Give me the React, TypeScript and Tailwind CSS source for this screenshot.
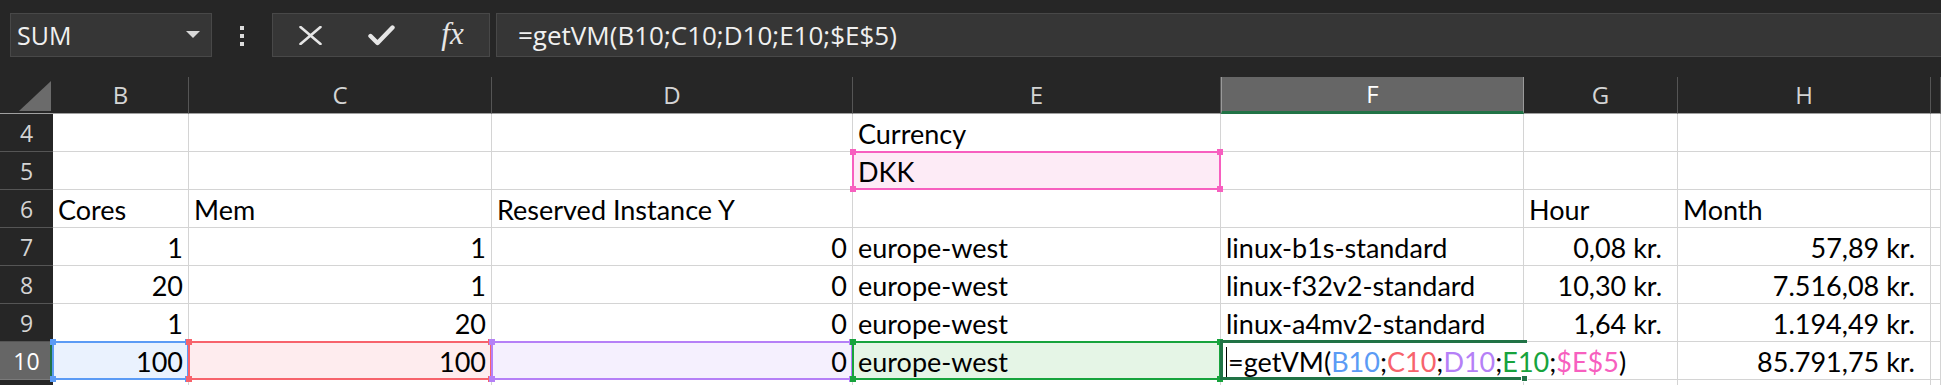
import React from "react";

type HLKey = "blue" | "red" | "purple" | "green" | "pink";

const HL: Record<HLKey, { bg: string; border: string; sq: string }> = {
  blue: { bg: "bg-[#eaf2fe]", border: "border-[#5b9bf5]", sq: "bg-[#5b9bf5]" },
  red: { bg: "bg-[#feecee]", border: "border-[#f7636c]", sq: "bg-[#f7636c]" },
  purple: { bg: "bg-[#f5f0fe]", border: "border-[#b580f7]", sq: "bg-[#b580f7]" },
  green: { bg: "bg-[#e5f5e6]", border: "border-[#17a33d]", sq: "bg-[#17a33d]" },
  pink: { bg: "bg-[#fdebf6]", border: "border-[#f75fbf]", sq: "bg-[#f75fbf]" },
};

const CELL_FONT = "font-['Lato','Liberation_Sans',sans-serif] text-[27px] text-black";
const UI_FONT = "font-['Open_Sans','Noto_Sans',sans-serif]";

function Cell({
  children,
  right,
  pr,
  hl,
}: {
  children?: React.ReactNode;
  right?: boolean;
  pr?: string;
  hl?: HLKey;
}) {
  const h = hl ? HL[hl] : null;
  return (
    <div
      className={[
        "relative h-[38px] border-r border-b border-[#d4d4d4] flex items-center whitespace-nowrap pt-[2px]",
        CELL_FONT,
        h ? h.bg : "bg-white",
        right ? "justify-end" : "justify-start pl-[5px]",
        right ? pr ?? "pr-[5px]" : "",
      ].join(" ")}
    >
      {children !== undefined && <span className="relative z-10 leading-[30px]">{children}</span>}
      {h && (
        <div className={"absolute -top-px -left-px -right-px -bottom-px border-2 z-20 " + h.border}>
          <div className={"absolute -top-[4px] -left-[4px] w-[6px] h-[6px] " + h.sq} />
          <div className={"absolute -top-[4px] -right-[4px] w-[6px] h-[6px] " + h.sq} />
          <div className={"absolute -bottom-[4px] -left-[4px] w-[6px] h-[6px] " + h.sq} />
          <div className={"absolute -bottom-[4px] -right-[4px] w-[6px] h-[6px] " + h.sq} />
        </div>
      )}
    </div>
  );
}

function RowHead({ n, sel }: { n?: number; sel?: boolean }) {
  return (
    <div
      className={[
        "h-[38px] flex items-center justify-center border-b text-[23px] relative",
        UI_FONT,
        sel ? "bg-[#666666] text-white border-[#7a7a7a]" : "bg-[#262626] text-[#d4d4d4] border-[#555555]",
      ].join(" ")}
    >
      {n !== undefined && <span className="leading-[30px]">{n}</span>}
      {sel && <div className="absolute right-0 top-0 bottom-0 w-[3px] bg-[#217346]" />}
    </div>
  );
}

function ColHead({ l, sel }: { l: string; sel?: boolean }) {
  return (
    <div
      className={[
        "h-[37px] flex items-center justify-center text-[24px] relative",
        UI_FONT,
        sel
          ? "bg-[#666666] text-white border-x border-[#9a9a9a] border-b-[3px] border-b-[#217346]"
          : "bg-[#262626] text-[#d4d4d4] border-r border-[#555555] border-b border-b-[#a0a0a0]",
      ].join(" ")}
    >
      <span className="leading-[30px]">{l}</span>
    </div>
  );
}

function Toolbar() {
  return (
    <div className="h-[77px] flex items-start pt-[13px] pl-[10px]">
      <div className="w-[202px] h-[44px] bg-[#363636] border border-[#484848] flex items-center justify-between pl-[6px] pr-[11px]">
        <span className={UI_FONT + " text-[25px] text-[#f0f0f0] leading-[30px]"}>SUM</span>
        <svg width="14" height="8" viewBox="0 0 14 8">
          <polygon points="0,0 14,0 7,7" fill="#d8d8d8" />
        </svg>
      </div>
      <div className="w-[60px] h-[44px] flex flex-col items-center justify-center gap-[4px] pt-[1px]">
        <div className="w-[4px] h-[4px] bg-[#dcdcdc]" />
        <div className="w-[4px] h-[4px] bg-[#dcdcdc]" />
        <div className="w-[4px] h-[4px] bg-[#dcdcdc]" />
      </div>
      <div className="w-[218px] h-[44px] bg-[#363636] border border-[#484848] grid grid-cols-[71px_71px_71px] pl-[2px]">
        <div className="flex items-center justify-center">
          <svg width="23" height="19" viewBox="0 0 23 19">
            <path d="M1.5 1 L21.5 18 M21.5 1 L1.5 18" stroke="#e6e6e6" strokeWidth="2.6" strokeLinecap="round" fill="none" />
          </svg>
        </div>
        <div className="flex items-center justify-center">
          <svg width="27" height="21" viewBox="0 0 27 21">
            <path d="M2.5 11 L9.5 18 L24.5 2.5" stroke="#e6e6e6" strokeWidth="4.4" strokeLinecap="round" strokeLinejoin="round" fill="none" />
          </svg>
        </div>
        <div className="flex items-center justify-center">
          <span className="font-['Liberation_Serif',serif] italic text-[31px] text-[#e6e6e6] leading-[30px] -mt-[3px]">fx</span>
        </div>
      </div>
      <div className="flex-1 ml-[6px] h-[44px] bg-[#363636] border border-[#484848] border-r-0 flex items-center pl-[21px]">
        <span className={UI_FONT + " text-[26px] text-[#f0f0f0] leading-[30px] whitespace-nowrap"}>
          =getVM(B10;C10;D10;E10;$E$5)
        </span>
      </div>
    </div>
  );
}

export default function App() {
  const money = "pr-[15px]";
  return (
    <div className="w-[1941px] h-[385px] bg-[#262626] overflow-hidden">
      <Toolbar />
      <div className="grid grid-cols-[53px_136px_303px_361px_368px_303px_154px_253px_10px]">
        {/* header */}
        <div className="h-[37px] bg-[#262626] border-b border-[#a0a0a0] relative">
          <svg className="absolute left-[19px] top-[4px]" width="32" height="30" viewBox="0 0 32 30">
            <polygon points="32,0 32,30 0,30" fill="#6b6b6b" />
          </svg>
        </div>
        <ColHead l="B" />
        <ColHead l="C" />
        <ColHead l="D" />
        <ColHead l="E" />
        <ColHead l="F" sel />
        <ColHead l="G" />
        <ColHead l="H" />
        <ColHead l="" />

        {/* row 4 */}
        <RowHead n={4} />
        <Cell />
        <Cell />
        <Cell />
        <Cell>Currency</Cell>
        <Cell />
        <Cell />
        <Cell />
        <Cell />

        {/* row 5 */}
        <RowHead n={5} />
        <Cell />
        <Cell />
        <Cell />
        <Cell hl="pink">DKK</Cell>
        <Cell />
        <Cell />
        <Cell />
        <Cell />

        {/* row 6 */}
        <RowHead n={6} />
        <Cell>Cores</Cell>
        <Cell>Mem</Cell>
        <Cell>Reserved Instance Y</Cell>
        <Cell />
        <Cell />
        <Cell>Hour</Cell>
        <Cell>Month</Cell>
        <Cell />

        {/* row 7 */}
        <RowHead n={7} />
        <Cell right>1</Cell>
        <Cell right>1</Cell>
        <Cell right>0</Cell>
        <Cell>europe-west</Cell>
        <Cell>linux-b1s-standard</Cell>
        <Cell right pr={money}>0,08 kr.</Cell>
        <Cell right pr={money}>57,89 kr.</Cell>
        <Cell />

        {/* row 8 */}
        <RowHead n={8} />
        <Cell right>20</Cell>
        <Cell right>1</Cell>
        <Cell right>0</Cell>
        <Cell>europe-west</Cell>
        <Cell>linux-f32v2-standard</Cell>
        <Cell right pr={money}>10,30 kr.</Cell>
        <Cell right pr={money}>7.516,08 kr.</Cell>
        <Cell />

        {/* row 9 */}
        <RowHead n={9} />
        <Cell right>1</Cell>
        <Cell right>20</Cell>
        <Cell right>0</Cell>
        <Cell>europe-west</Cell>
        <Cell>linux-a4mv2-standard</Cell>
        <Cell right pr={money}>1,64 kr.</Cell>
        <Cell right pr={money}>1.194,49 kr.</Cell>
        <Cell />

        {/* row 10 */}
        <RowHead n={10} sel />
        <Cell right hl="blue">100</Cell>
        <Cell right hl="red">100</Cell>
        <Cell right hl="purple">0</Cell>
        <Cell hl="green">europe-west</Cell>
        <div className={"relative h-[38px] bg-white border-b border-[#d4d4d4] flex items-center whitespace-nowrap pt-[2px] pl-[7px] z-30 " + CELL_FONT}>
          <div className="absolute -top-[2px] -left-px w-[307px] h-[3px] bg-[#217346]" />
          <div className="absolute -bottom-[1px] -left-px w-[307px] h-[3px] bg-[#217346]" />
          <div className="absolute -top-[2px] -bottom-[1px] -left-px w-[3px] bg-[#217346]" />
          <div className="absolute -bottom-[3px] left-[300px] w-[7px] h-[7px] bg-[#217346] border border-white" />
          <div className="absolute left-[5px] top-[5px] w-px h-[30px] bg-black" />
          <span className="relative leading-[30px]">
            =getVM(<span className="text-[#5b9bf5]">B10</span>;<span className="text-[#f7636c]">C10</span>;
            <span className="text-[#b580f7]">D10</span>;<span className="text-[#17a33d]">E10</span>;
            <span className="text-[#f75fbf]">$E$5</span>)
          </span>
        </div>
        <Cell />
        <Cell right pr={money}>85.791,75 kr.</Cell>
        <Cell />

        {/* row 11 (partial) */}
        <RowHead />
        <Cell />
        <Cell />
        <Cell />
        <Cell />
        <Cell />
        <Cell />
        <Cell />
        <Cell />
      </div>
    </div>
  );
}
